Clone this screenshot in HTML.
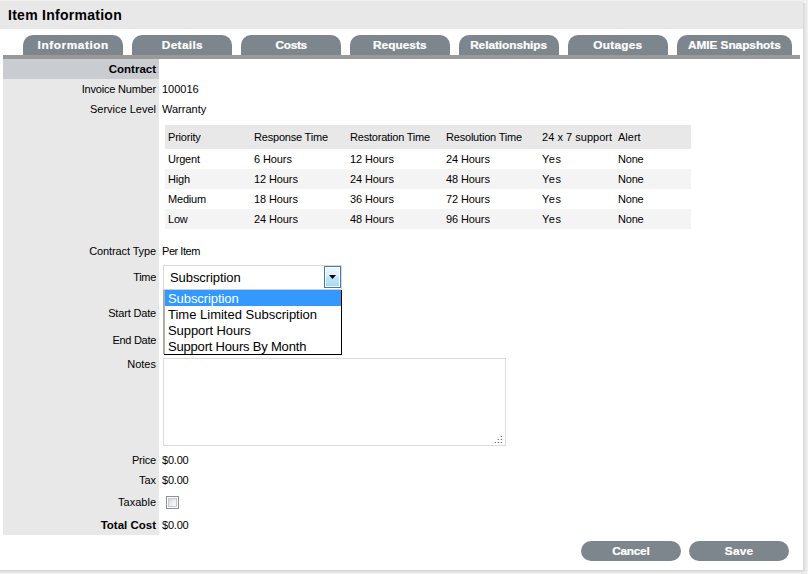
<!DOCTYPE html>
<html><head><meta charset="utf-8">
<style>
*{box-sizing:border-box;margin:0;padding:0}
html,body{width:808px;height:574px;overflow:hidden;background:#f0f0f0;font-family:"Liberation Sans",sans-serif;color:#000}
.a{position:absolute;white-space:nowrap}
#dlg{position:absolute;left:0;top:1px;width:803px;height:569px;background:#fff}
#shr{position:absolute;left:803px;top:3px;width:5px;height:567px;background:linear-gradient(90deg,#dadada 0,#dadada 1px,#e0e0e0 1px,#e0e0e0 2px,#e9e9e9 2px,#e9e9e9 4px,#f2f2f2 4px)}
#shc{position:absolute;left:803px;top:570px;width:5px;height:4px;background:radial-gradient(circle at 0 0,#dadada 0,#e4e4e4 2px,#f0f0f0 4px)}
#shb{position:absolute;left:0;top:570px;width:803px;height:4px;background:linear-gradient(180deg,#dadada 0,#dadada 1px,#e0e0e0 1px,#e0e0e0 2px,#e8e8e8 2px,#e8e8e8 3px,#f0f0f0 3px)}
#hdr{position:absolute;left:0;top:1px;width:803px;height:28px;background:#e8e8e8}
.title{left:8px;top:6px;font-size:14px;font-weight:bold;line-height:18px;letter-spacing:0.27px}
.tab{position:absolute;top:35px;height:20px;width:100px;background:#7d868c;border-radius:10px 10px 0 0;color:#fff;font-size:10px;font-weight:bold;text-align:center;line-height:22px;-webkit-text-stroke:0.2px #fff}
#bar{position:absolute;left:3px;top:55px;width:797px;height:4px;background:#999}
#lcol{position:absolute;left:3px;top:59px;width:156px;height:476px;background:#e8e8e8}
#chdr{position:absolute;left:3px;top:59px;width:156px;height:20px;background:#c9ccd1}
.lbl{position:absolute;right:652px;font-size:11px;line-height:14px}
.val{position:absolute;left:162px;font-size:11px;line-height:14px}
.b{font-weight:bold;font-size:11.5px}
#tbl{position:absolute;left:165px;top:125px;width:526px;height:104px}
.row{position:absolute;left:0;width:526px;height:20px}
.cell{position:absolute;font-size:11px;line-height:14px;white-space:nowrap;letter-spacing:-0.2px}
#sel{position:absolute;left:163px;top:265px;width:179px;height:25px;border:1px solid #d9d9d9;border-bottom-color:#d6cec5;background:#fff}
#selbtn{position:absolute;left:324px;top:266px;width:17px;height:22px;border:1px solid #3c7fb1;background:linear-gradient(#eaf6fd,#d9f0fc 45%,#bee6fd 50%,#a7d9f5);box-shadow:inset 0 0 0 1px #fff}
#arrow{position:absolute;left:329px;top:275px;width:0;height:0;border-left:3.5px solid transparent;border-right:3.5px solid transparent;border-top:4px solid #000}
#list{position:absolute;left:163px;top:290px;width:179px;height:65px;border-right:1px solid #000;border-bottom:1px solid #000;background:#fff;box-shadow:inset 1px 0 0 #a9a9a9,inset 2px 0 0 #b4ada8}
#lc{position:absolute;left:163px;top:354px;width:1px;height:1px;background:#fff}
#hl{position:absolute;left:165px;top:290px;width:176px;height:16px;background:#3399ff}
.opt{position:absolute;left:168px;font-size:13px;line-height:16px}
#ta{position:absolute;left:163px;top:358px;width:343px;height:88px;border:1px solid #dcdcdc;background:#fff}
#cb{position:absolute;left:166px;top:496px;width:13px;height:13px;border:1px solid #8e8f8f;background:#fff}
#cbi{position:absolute;left:168px;top:498px;width:9px;height:9px;border:1px solid #c3c8d0;background:linear-gradient(135deg,#d4d8df,#f0f1f3 60%,#fafafa)}
.dot{position:absolute;width:1px;height:1px;background:#707070;box-shadow:-1px 0 0 #d8d8d8}
.tt{display:inline-block;transform:scaleX(1.18)}
.btn{position:absolute;top:541px;width:100px;height:20px;border-radius:10px;background:#7d868c;color:#fff;font-size:10px;font-weight:bold;text-align:center;line-height:22px;-webkit-text-stroke:0.2px #fff}
</style></head><body>
<div id="dlg"></div><div id="shr"></div><div id="shb"></div><div id="shc"></div>
<div id="hdr"></div>
<div class="a title">Item Information</div>

<div class="tab" style="left:23px"><span class="tt" style="letter-spacing:0.49px">Information</span></div>
<div class="tab" style="left:132px"><span class="tt" style="letter-spacing:0.28px">Details</span></div>
<div class="tab" style="left:241px"><span class="tt" style="letter-spacing:-0.27px">Costs</span></div>
<div class="tab" style="left:350px"><span class="tt" style="letter-spacing:0.06px">Requests</span></div>
<div class="tab" style="left:459px"><span class="tt" style="letter-spacing:-0.03px">Relationships</span></div>
<div class="tab" style="left:568px"><span class="tt" style="letter-spacing:0.24px">Outages</span></div>
<div class="tab" style="left:677px;width:115px"><span class="tt" style="letter-spacing:-0.02px">AMIE Snapshots</span></div>
<div id="bar"></div>

<div id="lcol"></div>
<div id="chdr"></div>

<div class="lbl b" style="top:62px">Contract</div>
<div class="lbl" style="top:82px;letter-spacing:-0.19px">Invoice Number</div>
<div class="val" style="top:82px">100016</div>
<div class="lbl" style="top:102px">Service Level</div>
<div class="val" style="top:102px">Warranty</div>

<div id="tbl">
 <div class="row" style="top:0;height:24px;background:#e8e8e8"></div>
 <div class="row" style="top:24px;background:#fff"></div>
 <div class="row" style="top:44px;background:#f4f4f4"></div>
 <div class="row" style="top:64px;background:#fff"></div>
 <div class="row" style="top:84px;background:#f4f4f4"></div>
 <div class="cell" style="left:3px;top:5px">Priority</div>
 <div class="cell" style="left:89px;top:5px">Response Time</div>
 <div class="cell" style="left:185px;top:5px">Restoration Time</div>
 <div class="cell" style="left:281px;top:5px">Resolution Time</div>
 <div class="cell" style="left:377px;top:5px;letter-spacing:0.03px">24 x 7 support</div>
 <div class="cell" style="left:453px;top:5px;letter-spacing:0px">Alert</div>
 <div class="cell" style="left:3px;top:27px">Urgent</div>
 <div class="cell" style="left:89px;top:27px;letter-spacing:-0.1px">6 Hours</div>
 <div class="cell" style="left:185px;top:27px;letter-spacing:-0.1px">12 Hours</div>
 <div class="cell" style="left:281px;top:27px;letter-spacing:-0.1px">24 Hours</div>
 <div class="cell" style="left:377px;top:27px;letter-spacing:0.5px">Yes</div>
 <div class="cell" style="left:453px;top:27px">None</div>
 <div class="cell" style="left:3px;top:47px">High</div>
 <div class="cell" style="left:89px;top:47px;letter-spacing:-0.1px">12 Hours</div>
 <div class="cell" style="left:185px;top:47px;letter-spacing:-0.1px">24 Hours</div>
 <div class="cell" style="left:281px;top:47px;letter-spacing:-0.1px">48 Hours</div>
 <div class="cell" style="left:377px;top:47px;letter-spacing:0.5px">Yes</div>
 <div class="cell" style="left:453px;top:47px">None</div>
 <div class="cell" style="left:3px;top:67px">Medium</div>
 <div class="cell" style="left:89px;top:67px;letter-spacing:-0.1px">18 Hours</div>
 <div class="cell" style="left:185px;top:67px;letter-spacing:-0.1px">36 Hours</div>
 <div class="cell" style="left:281px;top:67px;letter-spacing:-0.1px">72 Hours</div>
 <div class="cell" style="left:377px;top:67px;letter-spacing:0.5px">Yes</div>
 <div class="cell" style="left:453px;top:67px">None</div>
 <div class="cell" style="left:3px;top:87px">Low</div>
 <div class="cell" style="left:89px;top:87px;letter-spacing:-0.1px">24 Hours</div>
 <div class="cell" style="left:185px;top:87px;letter-spacing:-0.1px">48 Hours</div>
 <div class="cell" style="left:281px;top:87px;letter-spacing:-0.1px">96 Hours</div>
 <div class="cell" style="left:377px;top:87px;letter-spacing:0.5px">Yes</div>
 <div class="cell" style="left:453px;top:87px">None</div>
</div>

<div class="lbl" style="top:244px;letter-spacing:-0.12px">Contract Type</div>
<div class="val" style="top:244px;letter-spacing:-0.45px">Per Item</div>
<div class="lbl" style="top:270px;letter-spacing:-0.3px">Time</div>

<div id="sel"></div>
<div class="a opt" style="left:170px;top:270px;letter-spacing:-0.08px">Subscription</div>
<div id="selbtn"></div>
<svg class="a" style="left:329px;top:275px" width="7" height="4"><path d="M0 0H7L3.5 4Z" fill="#000"/></svg>

<div class="lbl" style="top:306px;letter-spacing:-0.17px">Start Date</div>
<div class="lbl" style="top:333px;letter-spacing:-0.28px">End Date</div>
<div class="lbl" style="top:357px">Notes</div>

<div id="ta"></div><div class="dot" style="left:501px;top:436px"></div><div class="dot" style="left:498px;top:439px"></div><div class="dot" style="left:501px;top:439px"></div><div class="dot" style="left:495px;top:442px"></div><div class="dot" style="left:498px;top:442px"></div><div class="dot" style="left:501px;top:442px"></div>

<div class="lbl" style="top:453px;letter-spacing:-0.2px">Price</div>
<div class="val" style="top:453px;letter-spacing:-0.2px">$0.00</div>
<div class="lbl" style="top:473px">Tax</div>
<div class="val" style="top:473px;letter-spacing:-0.2px">$0.00</div>
<div class="lbl" style="top:495px">Taxable</div>
<div id="cb"></div><div id="cbi"></div>
<div class="lbl b" style="top:518px">Total Cost</div>
<div class="val" style="top:518px;letter-spacing:-0.2px">$0.00</div>

<div id="list"></div><div id="lc"></div>
<div id="hl"></div>
<div class="a opt" style="top:291px;color:#fff;letter-spacing:-0.08px">Subscription</div>
<div class="a opt" style="top:307px">Time Limited Subscription</div>
<div class="a opt" style="top:323px;letter-spacing:-0.08px">Support Hours</div>
<div class="a opt" style="top:339px;letter-spacing:-0.19px">Support Hours By Month</div>

<div class="btn" style="left:581px"><span class="tt" style="letter-spacing:-0.2px">Cancel</span></div>
<div class="btn" style="left:689px"><span class="tt" style="letter-spacing:0.2px">Save</span></div>
</body></html>
